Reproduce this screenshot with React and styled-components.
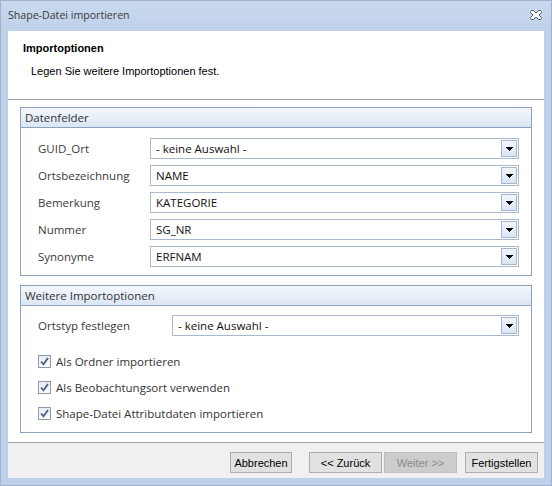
import React from 'react'
import styled, { createGlobalStyle } from 'styled-components'

const GlobalStyle = createGlobalStyle`
  html, body {
    margin: 0;
    padding: 0;
    background: #bfd1ea;
  }
  * { box-sizing: border-box; }
`

const uiFont = `"Open Sans", "Noto Sans", "DejaVu Sans", sans-serif`
const classicFont = `"Liberation Sans", Arial, sans-serif`

const Window = styled.div`
  width: 552px;
  height: 486px;
  background: #bfd1ea;
  border: 1px solid #9fb3d0;
  display: flex;
  flex-direction: column;
`

const TitleBar = styled.div`
  height: 30px;
  flex-shrink: 0;
  display: flex;
  align-items: center;
  justify-content: space-between;
  padding: 0 9px 2px 7px;
  background: linear-gradient(#c9d9ee, #bfd1ea);
  font-family: ${uiFont};
  font-size: 10.6px;
  color: #3a3a3a;
`

const Client = styled.div`
  flex: 1;
  margin: 0 7px 7px 7px;
  background: #fff;
  display: flex;
  flex-direction: column;
`

const Header = styled.div`
  height: 69px;
  flex-shrink: 0;
  border-bottom: 1px solid #a0a0a0;
  padding: 11px 0 0 15px;
  font-family: ${classicFont};
  font-size: 11px;
  color: #000;
`

const HeaderTitle = styled.div`
  font-weight: bold;
  line-height: 13px;
`

const HeaderText = styled.div`
  margin: 10px 0 0 8px;
  line-height: 13px;
`

const Content = styled.div`
  padding: 7px 12px 0 12px;
  display: flex;
  flex-direction: column;
  gap: 9px;
`

const Group = styled.div`
  border: 1px solid #8da2c0;
  display: flex;
  flex-direction: column;
`

const GroupHeader = styled.div`
  height: 20px;
  border-bottom: 1px solid #8da2c0;
  background: linear-gradient(#f4f8fd, #dbe6f4);
  padding-left: 4px;
  display: flex;
  align-items: center;
  font-family: ${uiFont};
  font-size: 11.5px;
  color: #333;
`

const GroupBody = styled.div`
  padding: ${p => p.$pad};
  display: flex;
  flex-direction: column;
  gap: ${p => p.$gap}px;
`

const FieldRow = styled.div`
  display: grid;
  grid-template-columns: ${p => p.$labelWidth}px 1fr;
  align-items: center;
  padding-left: 17px;
`

const Label = styled.div`
  font-family: ${uiFont};
  font-size: 11.5px;
  color: #3a3a3a;
`

const Combo = styled.div`
  height: 21px;
  border: 1px solid #abb9cf;
  display: flex;
  align-items: center;
  justify-content: space-between;
  padding: 1px 1px 1px 5px;
  font-family: ${uiFont};
  font-size: 11.5px;
  color: #111;
`

const DropButton = styled.div`
  width: 16px;
  height: 17px;
  border: 1px solid #a6b6cf;
  background: linear-gradient(#f2f6fc, #dae5f4);
  display: flex;
  align-items: center;
  justify-content: center;
`

const CheckRow = styled.label`
  height: 16px;
  display: flex;
  align-items: center;
  gap: 5px;
  padding-left: 17px;
  font-family: ${uiFont};
  font-size: 11.5px;
  color: #333;
`

const Box = styled.span`
  width: 13px;
  height: 13px;
  border: 1px solid #8e9aab;
  background: linear-gradient(#e8ecf2, #fafbfc);
  display: flex;
  align-items: center;
  justify-content: center;
`

const ButtonBar = styled.div`
  height: 36px;
  flex-shrink: 0;
  margin-top: auto;
  border-top: 1px solid #a0a0a0;
  background: #f0f0f0;
  display: flex;
  justify-content: flex-end;
  align-items: flex-start;
  padding: 9px 6px 0 0;
  gap: 2px;
`

const Button = styled.button`
  height: 21px;
  width: ${p => p.$w}px;
  margin-left: ${p => p.$ml || 0}px;
  border: 1px solid ${p => (p.disabled ? '#bfbfbf' : '#adadad')};
  background: ${p => (p.disabled ? '#cccccc' : '#e1e1e1')};
  color: ${p => (p.disabled ? '#8a8a8a' : '#000')};
  font-family: ${classicFont};
  font-size: 11px;
  padding: 0;
`

const Arrow = () => (
  <svg width="7" height="4" viewBox="0 0 7 4">
    <path d="M0 0h7v1h-1v1h-1v1h-1v1h-1v-1h-1v-1h-1v-1h-1z" fill="#000" />
  </svg>
)

const Check = () => (
  <svg width="9" height="9" viewBox="0 0 9 9">
    <path d="M1 4.5l2.5 2.8L8 1" fill="none" stroke="#4a5f80" strokeWidth="1.8" />
  </svg>
)

const CloseIcon = () => (
  <svg width="12" height="11" viewBox="0 0 12 11">
    <path
      d="M0.5 1.5l1-1h2l2.5 2.5 2.5-2.5h2l1 1v1l-2.5 2.5 2.5 2.5v1l-1 1h-2l-2.5-2.5-2.5 2.5h-2l-1-1v-1l2.5-2.5-2.5-2.5z"
      fill="#f4f6fa"
      stroke="#4e5866"
      strokeWidth="1"
    />
  </svg>
)

const ComboField = ({ label, value, labelWidth }) => (
  <FieldRow $labelWidth={labelWidth}>
    <Label>{label}</Label>
    <Combo>
      <span>{value}</span>
      <DropButton><Arrow /></DropButton>
    </Combo>
  </FieldRow>
)

const fields = [
  ['GUID_Ort', '- keine Auswahl -'],
  ['Ortsbezeichnung', 'NAME'],
  ['Bemerkung', 'KATEGORIE'],
  ['Nummer', 'SG_NR'],
  ['Synonyme', 'ERFNAM'],
]

const checks = [
  'Als Ordner importieren',
  'Als Beobachtungsort verwenden',
  'Shape-Datei Attributdaten importieren',
]

export default function App() {
  return (
    <>
      <GlobalStyle />
      <Window>
        <TitleBar>
          <span>Shape-Datei importieren</span>
          <CloseIcon />
        </TitleBar>
        <Client>
          <Header>
            <HeaderTitle>Importoptionen</HeaderTitle>
            <HeaderText>Legen Sie weitere Importoptionen fest.</HeaderText>
          </Header>
          <Content>
            <Group>
              <GroupHeader>Datenfelder</GroupHeader>
              <GroupBody $pad="10px 12px 8px 0" $gap={6}>
                {fields.map(([l, v]) => (
                  <ComboField key={l} label={l} value={v} labelWidth={112} />
                ))}
              </GroupBody>
            </Group>
            <Group>
              <GroupHeader>Weitere Importoptionen</GroupHeader>
              <GroupBody $pad="9px 12px 11px 0" $gap={0}>
                <ComboField label="Ortstyp festlegen" value="- keine Auswahl -" labelWidth={134} />
                <GroupBody $pad="17px 0 0 0" $gap={10}>
                  {checks.map(c => (
                    <CheckRow key={c}>
                      <Box><Check /></Box>
                      {c}
                    </CheckRow>
                  ))}
                </GroupBody>
              </GroupBody>
            </Group>
          </Content>
          <ButtonBar>
            <Button $w={62}>Abbrechen</Button>
            <Button $w={73} $ml={15}>&lt;&lt; Zurück</Button>
            <Button $w={73} disabled>Weiter &gt;&gt;</Button>
            <Button $w={73} $ml={6}>Fertigstellen</Button>
          </ButtonBar>
        </Client>
      </Window>
    </>
  )
}
